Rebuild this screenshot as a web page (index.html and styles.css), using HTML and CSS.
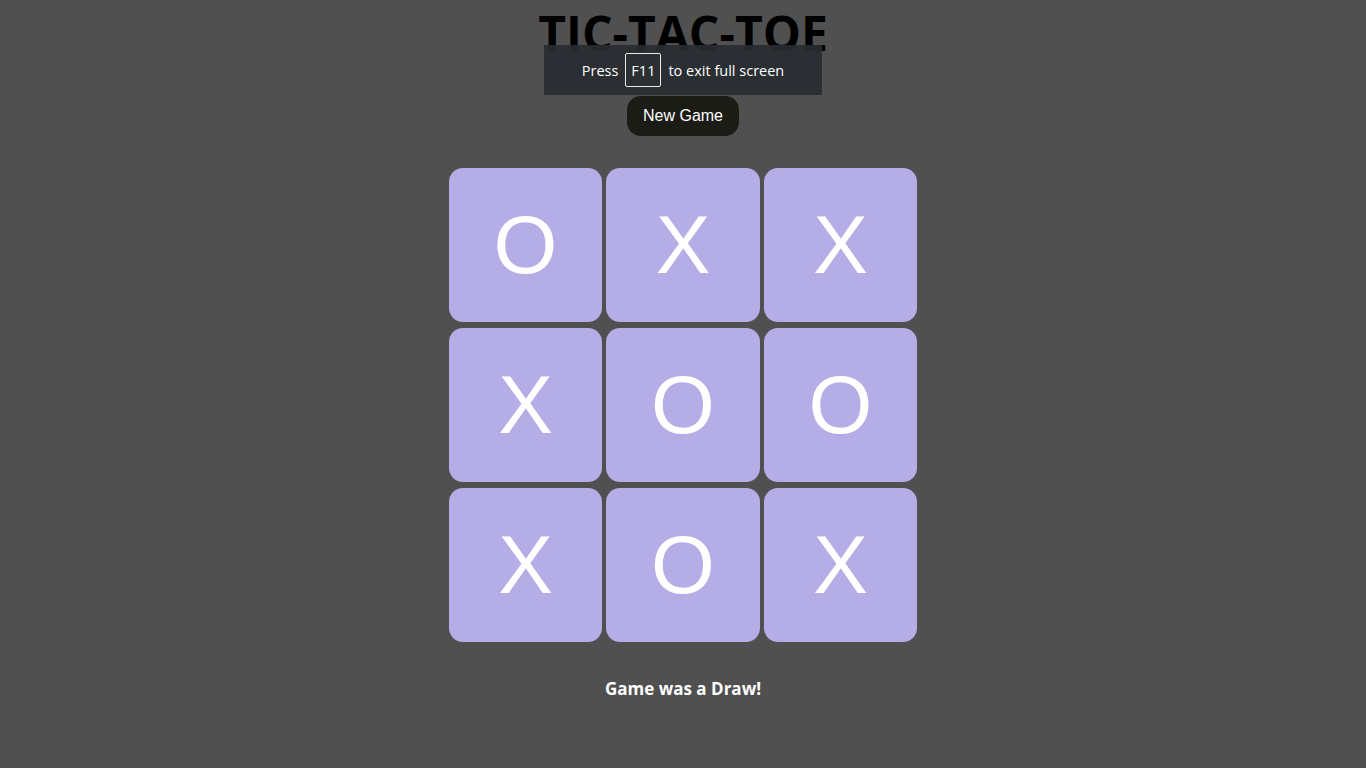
FILE: index.html
```html
<!DOCTYPE html>
<html>
<head>
<meta charset="utf-8">
<title>Tic-Tac-Toe</title>
<link rel="stylesheet" href="styles.css">
</head>
<body>
<main class="app">
  <h1 class="title">TIC-TAC-TOE</h1>
  <button class="new-game">New Game</button>
  <div class="board">
    <button class="cell">O</button>
    <button class="cell">X</button>
    <button class="cell">X</button>
    <button class="cell">X</button>
    <button class="cell">O</button>
    <button class="cell">O</button>
    <button class="cell">X</button>
    <button class="cell">O</button>
    <button class="cell">X</button>
  </div>
  <p class="status">Game was a Draw!</p>
</main>
<div class="fs-notice">Press <span class="key">F11</span> to exit full screen</div>
</body>
</html>
```
FILE: styles.css
```css
html, body {
  margin: 0;
  padding: 0;
  background: #505050;
  height: 100%;
}
body {
  font-family: "Open Sans", "Noto Sans", sans-serif;
}
.app {
  display: flex;
  flex-direction: column;
  align-items: center;
}
.title {
  margin: 0;
  padding-top: 2px;
  font-size: 48px;
  font-weight: 700;
  line-height: 62px;
  color: #000;
}
.new-game {
  margin-top: 32px;
  height: 40px;
  padding: 0 16px;
  border: none;
  border-radius: 14px;
  background: #1c1c17;
  color: #fff;
  font-family: "Liberation Sans", Arial, sans-serif;
  font-size: 16px;
}
.board {
  margin-top: 32px;
  display: grid;
  grid-template-columns: 153px 154px 153px;
  grid-auto-rows: 154px;
  column-gap: 4px;
  row-gap: 6px;
}
.cell {
  border: none;
  border-radius: 14px;
  background: #b5ade6;
  color: #fff;
  font-family: "Liberation Sans", Arial, sans-serif;
  font-size: 82px;
  padding: 0;
  line-height: 1;
}
.status {
  margin: 35px 0 0;
  font-size: 17px;
  font-weight: 700;
  color: #fff;
}
.fs-notice {
  position: absolute;
  left: 544px;
  top: 45px;
  width: 278px;
  height: 50px;
  display: flex;
  align-items: center;
  justify-content: center;
  gap: 7px;
  background: rgba(40, 43, 48, 0.92);
  color: #fff;
  font-family: "Open Sans", "Noto Sans", sans-serif;
  font-size: 14.5px;
}
.key {
  display: inline-flex;
  align-items: center;
  justify-content: center;
  height: 34px;
  padding: 0 5px;
  border: 1px solid #e8e8e8;
  border-radius: 2px;
  box-sizing: border-box;
}
```
